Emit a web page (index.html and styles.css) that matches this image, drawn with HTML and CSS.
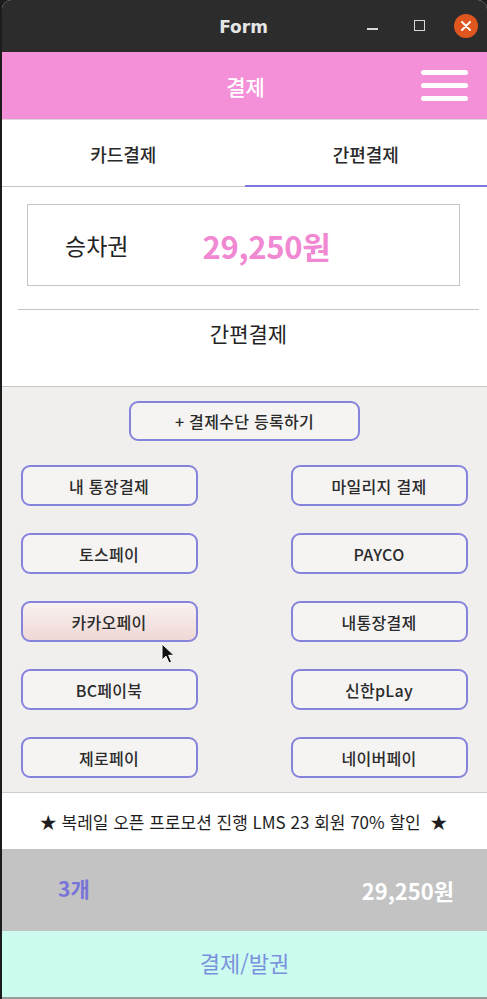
FILE: index.html
```html
<!DOCTYPE html>
<html lang="ko">
<head>
<meta charset="utf-8">
<title>Form</title>
<link rel="stylesheet" href="styles.css">
</head>
<body>
<div class="window">
  <div class="titlebar">
    <div></div>
    <div class="title">Form</div>
    <div class="controls">
      <span class="min"></span>
      <span class="max"></span>
      <span class="close">
        <svg width="10" height="10" viewBox="0 0 10 10"><path d="M1 1L9 9M9 1L1 9" stroke="#fff" stroke-width="1.8" stroke-linecap="round"/></svg>
      </span>
    </div>
  </div>

  <header class="appbar">
    <div></div>
    <div class="appbar-title">결제</div>
    <div class="menu">
      <span></span><span></span><span></span>
    </div>
  </header>

  <nav class="tabs">
    <div class="tab">카드결제</div>
    <div class="tab active">간편결제</div>
  </nav>

  <section class="summary">
    <div class="pricebox">
      <span class="item">승차권</span>
      <span class="price">29,250원</span>
    </div>
    <div class="divider"></div>
    <div class="section-title">간편결제</div>
  </section>

  <section class="pay">
    <button class="register">+ 결제수단 등록하기</button>
    <div class="grid">
      <button class="pbtn">내 통장결제</button>
      <button class="pbtn">마일리지 결제</button>
      <button class="pbtn">토스페이</button>
      <button class="pbtn">PAYCO</button>
      <button class="pbtn hover">카카오페이</button>
      <button class="pbtn">내통장결제</button>
      <button class="pbtn">BC페이북</button>
      <button class="pbtn">신한pLay</button>
      <button class="pbtn">제로페이</button>
      <button class="pbtn">네이버페이</button>
    </div>
    <svg class="cursor" width="16" height="22" viewBox="0 0 16 22"><path d="M1 1L1 17L5 13.2L8 20L10.6 18.8L7.7 12.3L13 12.3Z" fill="#111" stroke="#fff" stroke-width="1"/></svg>
  </section>

  <div class="promo">★ 복레일 오픈 프로모션 진행 LMS 23 회원 70% 할인 &nbsp;★</div>

  <div class="totalbar">
    <span class="count">3개</span>
    <span class="total">29,250원</span>
  </div>

  <button class="paybtn">결제/발권</button>
</div>
</body>
</html>
```

FILE: styles.css
```css
* { box-sizing: border-box; }
html, body {
  margin: 0;
  padding: 0;
  width: 487px;
  height: 999px;
  overflow: hidden;
  background: #1c1c1c;
  font-family: "Noto Sans CJK KR", "Noto Sans", sans-serif;
}
.window {
  margin-left: 2px;
  width: 485px;
  height: 999px;
  display: flex;
  flex-direction: column;
  background: #fff;
  border-top-left-radius: 9px;
  border-top-right-radius: 9px;
  overflow: hidden;
  border-bottom: 2px solid #9a9a9a;
}
.titlebar {
  height: 52px;
  background: #2c2c2c;
  display: grid;
  grid-template-columns: 1fr auto 1fr;
  align-items: center;
}
.title {
  color: #e6e6e6;
  font-family: "DejaVu Sans", "Noto Sans", sans-serif;
  font-weight: bold;
  font-size: 17px;
  padding-top: 2px;
  transform: translateX(-1px);
}
.controls {
  display: flex;
  justify-content: flex-end;
  align-items: center;
  padding-right: 9px;
}
.min {
  width: 11px;
  height: 2px;
  background: #d8d8d8;
  margin-top: 6px;
  margin-right: 36px;
}
.max {
  width: 11px;
  height: 11px;
  border: 1.5px solid #d8d8d8;
  margin-right: 29px;
  margin-top: -1px;
}
.close {
  width: 24px;
  height: 24px;
  border-radius: 50%;
  background: #e0561f;
  display: flex;
  align-items: center;
  justify-content: center;
}
.appbar {
  height: 68px;
  background: #f490d8;
  display: grid;
  grid-template-columns: 1fr auto 1fr;
  align-items: center;
  border-bottom: 1px solid #dcd4d8;
}
.appbar-title {
  color: #fff;
  font-size: 21px;
  font-weight: 500;
  transform: translateX(1px);
}
.menu {
  display: flex;
  flex-direction: column;
  align-items: flex-end;
  gap: 8px;
  padding-right: 19px;
}
.menu span {
  width: 47px;
  height: 5px;
  border-radius: 3px;
  background: #fff;
}
.tabs {
  display: grid;
  grid-template-columns: 1fr 1fr;
  height: 67px;
  background: #fff;
}
.tab {
  display: flex;
  align-items: center;
  justify-content: center;
  font-size: 18px;
  font-weight: 500;
  color: #2a2a2a;
  border-bottom: 1px solid #c9c2c4;
  padding-top: 2px;
}
.tab.active {
  border-bottom: 2.5px solid #7b78dc;
}
.summary {
  background: #fff;
  padding: 17px 8px 0 14px;
  height: 200px;
  display: flex;
  flex-direction: column;
  border-bottom: 1px solid #c8c6c4;
}
.pricebox {
  margin-left: 11px;
  width: 433px;
  height: 82px;
  border: 1px solid #c6c6c6;
  display: flex;
  align-items: center;
  padding-left: 37px;
  gap: 74px;
}
.item {
  font-size: 23px;
  color: #222;
}
.price {
  font-size: 31px;
  font-weight: bold;
  color: #f088d2;
  font-family: "Noto Sans CJK KR", "Noto Sans", sans-serif;
  letter-spacing: -0.3px;
}
.divider {
  margin-top: 23px;
  margin-left: 2px;
  height: 1px;
  background: #c4c4c4;
}
.section-title {
  text-align: center;
  font-size: 21px;
  font-weight: 400;
  color: #222;
  margin-top: 8px;
  padding-left: 2px;
}
.pay {
  position: relative;
  background: #f1efed;
  height: 406px;
  padding-top: 14px;
  display: flex;
  flex-direction: column;
  align-items: center;
  border-bottom: 1px solid #cfcdcb;
}
button {
  font-family: "Noto Sans CJK KR", "Noto Sans", sans-serif;
}
.register {
  width: 231px;
  height: 40px;
  border: 2px solid #8683dc;
  border-radius: 9px;
  background: #f6f4f3;
  font-size: 16px;
  font-weight: 500;
  letter-spacing: 0.3px;
  color: #2b2b2b;
  padding: 0;
}
.grid {
  margin-top: 24px;
  width: 447px;
  margin-left: -1px;
  display: grid;
  grid-template-columns: 177px 177px;
  justify-content: space-between;
  row-gap: 27px;
}
.pbtn {
  height: 41px;
  border: 2px solid #8683dc;
  border-radius: 9px;
  background: #f6f4f3;
  font-size: 16px;
  font-weight: 500;
  letter-spacing: 0.3px;
  color: #2b2b2b;
  padding: 0;
}
.pbtn.hover {
  background: linear-gradient(#f8f2f1, #efd8d5);
}
.cursor {
  position: absolute;
  left: 159px;
  top: 256px;
}
.promo {
  height: 56px;
  background: #fff;
  display: flex;
  align-items: center;
  justify-content: center;
  font-size: 17px;
  color: #1e1e1e;
  padding-right: 2px;
}
.totalbar {
  height: 82px;
  background: #c3c3c3;
  display: flex;
  align-items: center;
  justify-content: space-between;
  padding: 0 33px 0 56px;
  font-weight: bold;
}
.count {
  color: #7874d8;
  font-size: 21px;
  margin-top: -4px;
}
.total {
  color: #fff;
  font-size: 22px;
  font-family: "Noto Sans CJK KR", "Noto Sans", sans-serif;
}
.paybtn {
  flex: 1;
  border: none;
  background: #ccfbef;
  color: #7a92dc;
  font-size: 22px;
  font-weight: 400;
  padding: 0 0 4px 0;
}
```
